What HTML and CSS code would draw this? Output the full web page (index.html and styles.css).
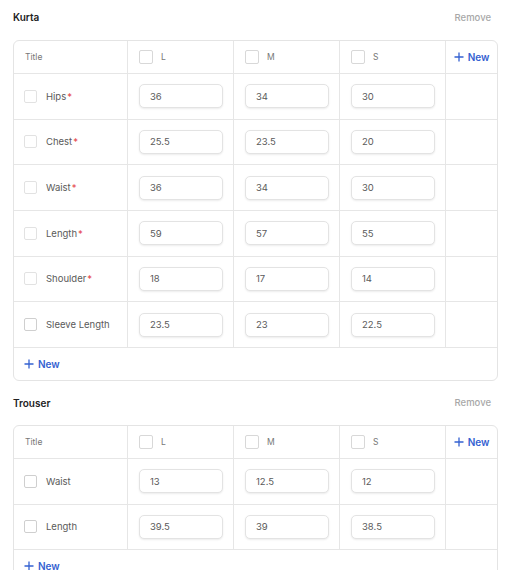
FILE: index.html
```html
<!DOCTYPE html>
<html>
<head>
<meta charset="utf-8">
<link rel="stylesheet" href="styles.css">
</head>
<body>
<div class="page">
  <section class="section">
    <div class="section-head">
      <span class="section-title">Kurta</span>
      <span class="remove">Remove</span>
    </div>
    <div class="card">
      <div class="row head">
        <div class="cell c-title"><span class="th">Title</span></div>
        <div class="cell c-size"><span class="cb cb-h"></span><span class="th">L</span></div>
        <div class="cell c-size"><span class="cb cb-h"></span><span class="th">M</span></div>
        <div class="cell c-size"><span class="cb cb-h"></span><span class="th">S</span></div>
        <div class="cell c-act"><span class="new"><svg class="plus" viewBox="0 0 10 10"><path d="M5 0.5V9.5M0.5 5H9.5"/></svg>New</span></div>
      </div>
      <div class="row">
        <div class="cell c-title"><span class="cb"></span><span class="label">Hips<span class="req">*</span></span></div>
        <div class="cell c-size"><input class="inp" value="36"></div>
        <div class="cell c-size"><input class="inp" value="34"></div>
        <div class="cell c-size"><input class="inp" value="30"></div>
        <div class="cell c-act"></div>
      </div>
      <div class="row">
        <div class="cell c-title"><span class="cb"></span><span class="label">Chest<span class="req">*</span></span></div>
        <div class="cell c-size"><input class="inp" value="25.5"></div>
        <div class="cell c-size"><input class="inp" value="23.5"></div>
        <div class="cell c-size"><input class="inp" value="20"></div>
        <div class="cell c-act"></div>
      </div>
      <div class="row">
        <div class="cell c-title"><span class="cb"></span><span class="label">Waist<span class="req">*</span></span></div>
        <div class="cell c-size"><input class="inp" value="36"></div>
        <div class="cell c-size"><input class="inp" value="34"></div>
        <div class="cell c-size"><input class="inp" value="30"></div>
        <div class="cell c-act"></div>
      </div>
      <div class="row">
        <div class="cell c-title"><span class="cb"></span><span class="label">Length<span class="req">*</span></span></div>
        <div class="cell c-size"><input class="inp" value="59"></div>
        <div class="cell c-size"><input class="inp" value="57"></div>
        <div class="cell c-size"><input class="inp" value="55"></div>
        <div class="cell c-act"></div>
      </div>
      <div class="row">
        <div class="cell c-title"><span class="cb"></span><span class="label">Shoulder<span class="req">*</span></span></div>
        <div class="cell c-size"><input class="inp" value="18"></div>
        <div class="cell c-size"><input class="inp" value="17"></div>
        <div class="cell c-size"><input class="inp" value="14"></div>
        <div class="cell c-act"></div>
      </div>
      <div class="row">
        <div class="cell c-title"><span class="cb cb-dark"></span><span class="label">Sleeve Length</span></div>
        <div class="cell c-size"><input class="inp" value="23.5"></div>
        <div class="cell c-size"><input class="inp" value="23"></div>
        <div class="cell c-size"><input class="inp" value="22.5"></div>
        <div class="cell c-act"></div>
      </div>
      <div class="foot">
        <span class="new"><svg class="plus" viewBox="0 0 10 10"><path d="M5 0.5V9.5M0.5 5H9.5"/></svg>New</span>
      </div>
    </div>
  </section>

  <section class="section">
    <div class="section-head">
      <span class="section-title">Trouser</span>
      <span class="remove">Remove</span>
    </div>
    <div class="card">
      <div class="row head">
        <div class="cell c-title"><span class="th">Title</span></div>
        <div class="cell c-size"><span class="cb cb-h"></span><span class="th">L</span></div>
        <div class="cell c-size"><span class="cb cb-h"></span><span class="th">M</span></div>
        <div class="cell c-size"><span class="cb cb-h"></span><span class="th">S</span></div>
        <div class="cell c-act"><span class="new"><svg class="plus" viewBox="0 0 10 10"><path d="M5 0.5V9.5M0.5 5H9.5"/></svg>New</span></div>
      </div>
      <div class="row">
        <div class="cell c-title"><span class="cb cb-dark"></span><span class="label">Waist</span></div>
        <div class="cell c-size"><input class="inp" value="13"></div>
        <div class="cell c-size"><input class="inp" value="12.5"></div>
        <div class="cell c-size"><input class="inp" value="12"></div>
        <div class="cell c-act"></div>
      </div>
      <div class="row">
        <div class="cell c-title"><span class="cb cb-dark"></span><span class="label">Length</span></div>
        <div class="cell c-size"><input class="inp" value="39.5"></div>
        <div class="cell c-size"><input class="inp" value="39"></div>
        <div class="cell c-size"><input class="inp" value="38.5"></div>
        <div class="cell c-act"></div>
      </div>
      <div class="foot">
        <span class="new"><svg class="plus" viewBox="0 0 10 10"><path d="M5 0.5V9.5M0.5 5H9.5"/></svg>New</span>
      </div>
    </div>
  </section>
</div>
</body>
</html>
```

FILE: styles.css
```css
* { box-sizing: border-box; }
html, body { margin: 0; padding: 0; background: #fff; }
body {
  font-family: Inter, "Noto Sans", sans-serif;
  font-size: 10px;
  color: #444;
  overflow: hidden;
  height: 570px;
}
.page {
  padding: 0 12px 0 13px;
}
.section { margin-bottom: 5px; }
.section-head {
  height: 34px;
  display: flex;
  align-items: center;
  justify-content: space-between;
  padding-right: 7px;
}
.section-title {
  font-weight: 600;
  font-size: 10px;
  color: #222;
}
.remove {
  font-weight: 500;
  font-size: 9.5px;
  color: #a8a8a8;
}
.card {
  margin-top: 6px;
  border: 1px solid #e4e4e4;
  border-radius: 6px;
}
.section + .section .card { margin-top: 5px; }
.row {
  display: flex;
  height: 45.67px;
  border-bottom: 1px solid #e6e6e6;
}
.row.head { height: 33px; }
.cell {
  display: flex;
  align-items: center;
  border-right: 1px solid #e6e6e6;
}
.c-title { width: 114px; padding-left: 10px; }
.head .c-title { padding-left: 11px; }
.c-size { width: 106px; padding-left: 11px; }
.c-act { flex: 1; border-right: none; justify-content: center; }
.th {
  font-size: 8.5px;
  color: #777;
}
.cb {
  display: inline-block;
  width: 13px;
  height: 13px;
  border: 1px solid #e2e2e2;
  border-radius: 2px;
  margin-right: 9px;
  flex: none;
}
.cb-h { width: 14px; height: 14px; margin-right: 8px; border-color: #d8d8d8; }
.cb-dark { border-color: #cfcfcf; }
.label {
  font-size: 9.5px;
  color: #5a5a5a;
}
.req { color: #e5484d; margin-left: 1px; }
.inp {
  width: 84px;
  height: 24px;
  border: 1px solid #e3e3e3;
  border-radius: 5px;
  box-shadow: 0 1px 2px rgba(0,0,0,0.08);
  padding: 0 0 0 10px;
  font-family: Inter, "Noto Sans", sans-serif;
  font-size: 9.5px;
  color: #5a5a5a;
  background: #fff;
  outline: none;
  margin: 0;
}
.new {
  display: inline-flex;
  align-items: center;
  font-weight: 600;
  font-size: 10px;
  color: #3461d1;
}
.plus {
  width: 10px;
  height: 10px;
  margin-right: 4px;
  fill: none;
  stroke: #3461d1;
  stroke-width: 1.3;
}
.foot {
  height: 32px;
  display: flex;
  align-items: center;
  padding-left: 10px;
}
```
